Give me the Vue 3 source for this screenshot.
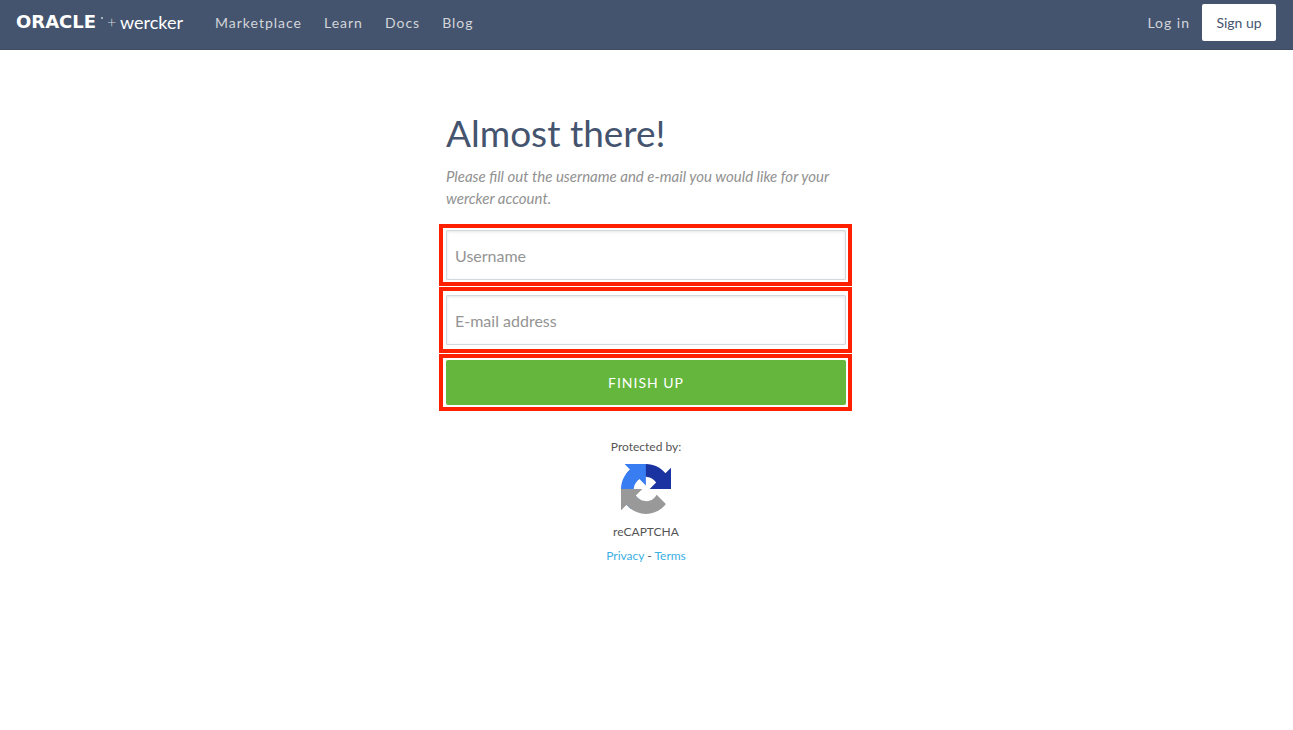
<script setup>
import { ref } from 'vue'

const links = ['Marketplace', 'Learn', 'Docs', 'Blog']
const username = ref('')
const email = ref('')
</script>

<template>
  <div class="page">
    <header class="bar">
      <a class="logo" href="#" aria-label="Oracle and wercker home">
        <span class="oracle">ORACLE</span>
        <svg class="registered" viewBox="0 0 4 12" width="4" height="12" aria-hidden="true">
          <circle cx="2" cy="2" r="1" fill="#c9ced7" />
        </svg>
        <span class="plus">+</span>
        <span class="wercker">wercker</span>
      </a>
      <nav class="links">
        <a v-for="link in links" :key="link" href="#">{{ link }}</a>
      </nav>
      <a class="login" href="#">Log in</a>
      <a class="signup" href="#">Sign up</a>
    </header>

    <main class="column">
      <h1>Almost there!</h1>
      <p class="intro">Please fill out the username and e-mail you would like for your wercker account.</p>

      <form @submit.prevent>
        <div class="mark">
          <input v-model="username" type="text" placeholder="Username" aria-label="Username">
        </div>
        <div class="mark roomy">
          <input v-model="email" type="email" placeholder="E-mail address" aria-label="E-mail address">
        </div>
        <div class="mark">
          <button type="submit">FINISH UP</button>
        </div>
      </form>

      <section class="captcha">
        <p>Protected by:</p>
        <svg viewBox="0 0 64 64" width="50" height="50" aria-hidden="true">
          <path fill="#1a33a0" d="M64 31.955l-.005-1.37V4.687l-7.16 7.16C50.974 4.674 42.05.094 32.06.094c-10.4 0-19.63 4.96-25.458 12.64l11.736 11.86a15.55 15.55 0 0 1 4.754-5.334c2.05-1.6 4.952-2.906 8.968-2.906.485 0 .86.057 1.135.163 4.976.393 9.288 3.14 11.828 7.124l-8.307 8.307L64 31.953" />
          <path fill="#397df2" d="M31.862.094l-1.37.005H4.594l7.16 7.16C4.58 13.12 0 22.044 0 32.034c0 10.4 4.96 19.63 12.64 25.458l11.86-11.736a15.55 15.55 0 0 1-5.334-4.754c-1.6-2.05-2.906-4.952-2.906-8.968 0-.485.057-.86.163-1.135.393-4.976 3.14-9.288 7.124-11.828l8.307 8.307L31.86.095" />
          <path fill="#999" d="M.001 32.045l.005 1.37v25.9l7.16-7.16c5.86 7.173 14.774 11.754 24.774 11.754 10.4 0 19.63-4.96 25.458-12.64l-11.736-11.86a15.55 15.55 0 0 1-4.754 5.334c-2.05 1.6-4.952 2.906-8.968 2.906-.485 0-.86-.057-1.135-.163-4.976-.393-9.288-3.14-11.828-7.124l8.307-8.307c-10.522.04-22.4.066-27.295-.005" />
        </svg>
        <p>reCAPTCHA</p>
        <p><a href="#">Privacy</a> - <a href="#">Terms</a></p>
      </section>
    </main>
  </div>
</template>

<style scoped>
.page {
  font-family: Lato, sans-serif;
  color: #555;
}
a {
  text-decoration: none;
}
.bar {
  display: flex;
  align-items: center;
  box-sizing: border-box;
  height: 50px;
  padding: 0 17px 5px 16px;
  background: #45546e;
  border-bottom: 1px solid #3e4c64;
  font-size: 14px;
  letter-spacing: 1px;
}
.logo {
  display: flex;
  align-items: center;
  color: #fff;
  letter-spacing: 0;
  line-height: 20px;
}
.oracle {
  width: 84px;
  font: bold 18px/20px "DejaVu Sans", sans-serif;
}
.registered {
  margin-right: 3px;
}
.plus {
  width: 13px;
  font-size: 16px;
  font-weight: 300;
  color: #d5d9df;
}
.wercker {
  font-size: 18px;
}
.links {
  display: flex;
  flex: 1;
  gap: 22px;
  margin-left: 32px;
}
.links a,
.login {
  color: #d2d5da;
}
.signup {
  min-width: 74px;
  margin-left: 12px;
  border-radius: 2px;
  background: #fff;
  color: #45546e;
  line-height: 37px;
  letter-spacing: 0;
  text-align: center;
}
.column {
  box-sizing: border-box;
  max-width: 415px;
  margin: 0 auto;
  padding: 59px 8px 40px 7px;
}
h1 {
  margin: 0;
  color: #45546e;
  font-size: 37px;
  font-weight: 400;
  line-height: 47px;
}
.intro {
  margin: 9px 0 15px;
  color: #919191;
  font-size: 15px;
  font-style: italic;
  line-height: 22px;
}
form {
  display: flex;
  flex-direction: column;
  gap: 1px;
  margin: 0 -6px 0 -7px;
}
.mark {
  padding: 2px 2px 2px 3px;
  border: 4px solid #ff2000;
}
.roomy {
  padding-top: 4px;
  padding-bottom: 4px;
}
input,
button {
  display: block;
  box-sizing: border-box;
  width: 100%;
  margin: 0;
  font-family: inherit;
}
input {
  height: 50px;
  padding: 1px 8px 0;
  border: 1px solid #d3d8dd;
  border-radius: 1px;
  background: #fff;
  box-shadow: inset 0 1px 3px rgba(69, 84, 110, 0.15);
  color: #555;
  font-size: 16px;
}
input::placeholder {
  color: #949494;
  opacity: 1;
}
button {
  height: 45px;
  border: 0;
  border-radius: 2px;
  background: #64b63c;
  color: #fff;
  font-size: 14px;
  letter-spacing: 1px;
}
.captcha {
  display: flex;
  flex-direction: column;
  align-items: center;
  padding-top: 24px;
  font-size: 12px;
  line-height: 24px;
}
.captcha p {
  margin: 0;
}
.captcha svg {
  margin: 5px 0 6px;
}
.captcha a {
  color: #3bb0e3;
}
</style>

<style>
body {
  background: #fff;
}
</style>
